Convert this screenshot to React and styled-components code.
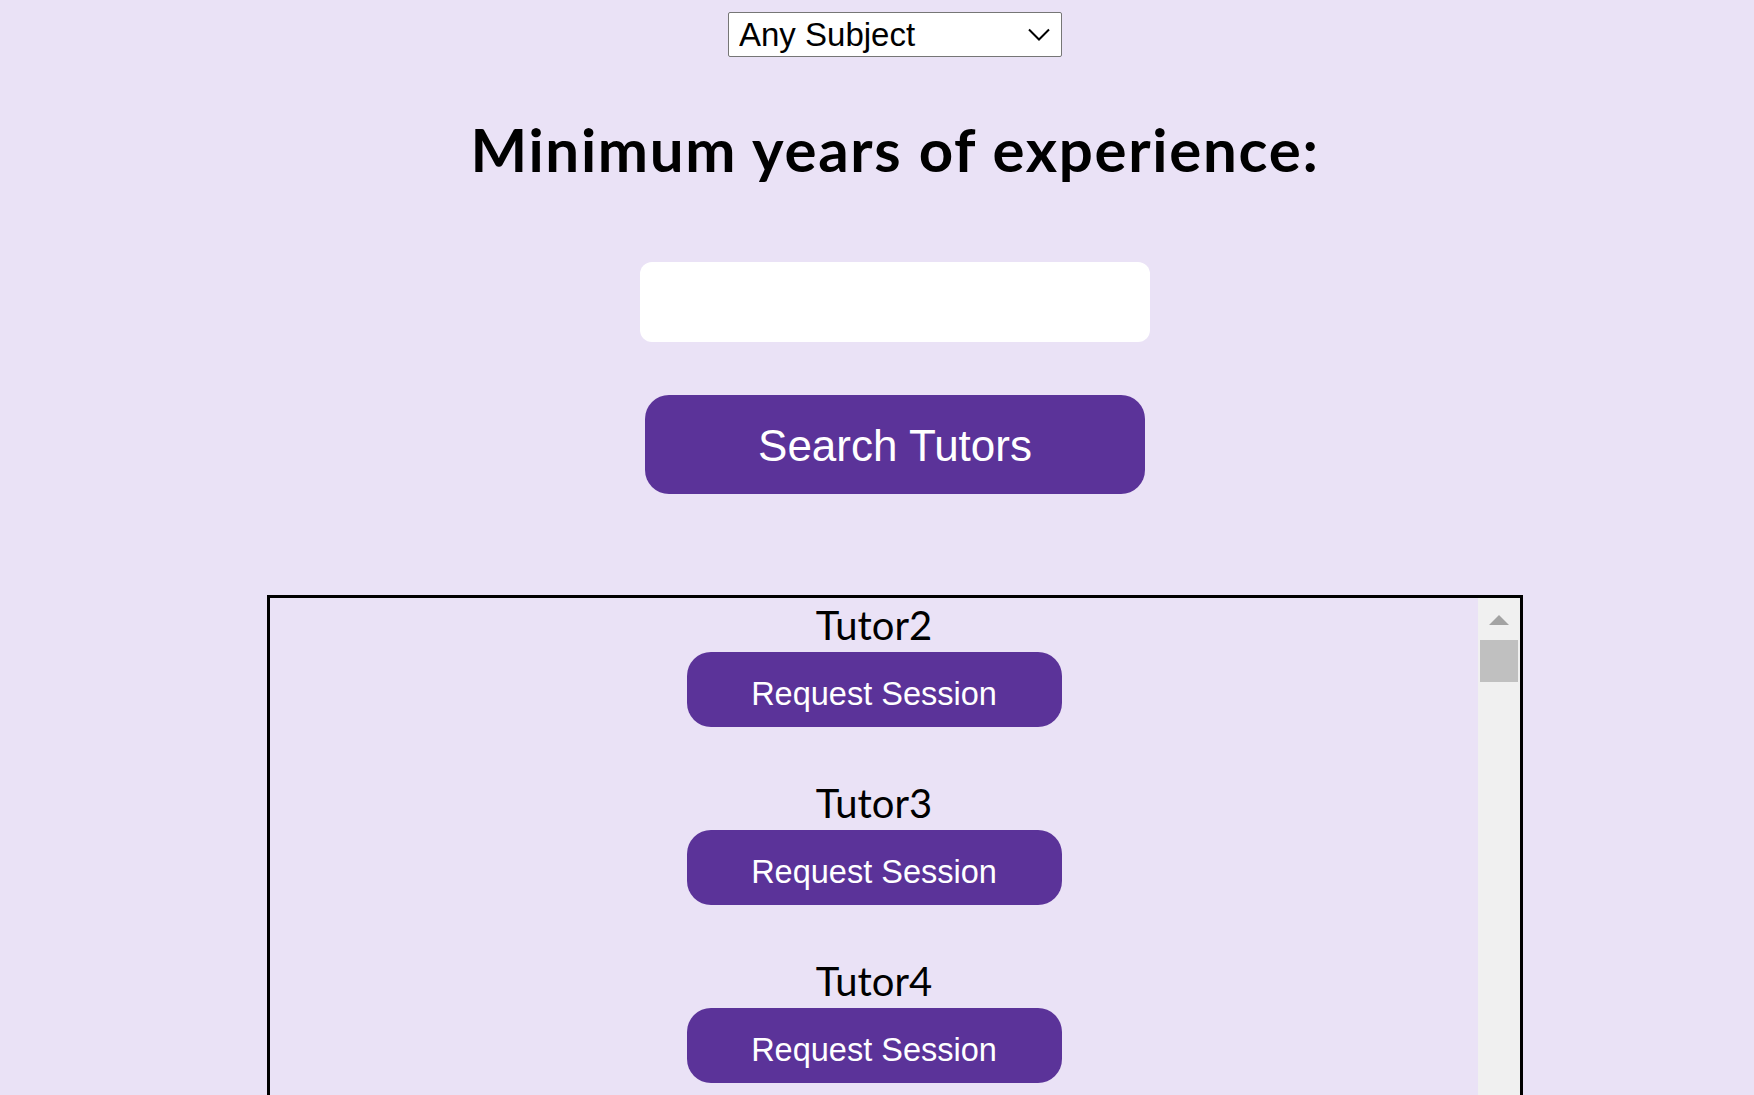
import React from 'react';
import styled, { createGlobalStyle } from 'styled-components';

const GlobalStyle = createGlobalStyle`
    html, body { margin:0; padding:0; overflow:hidden; background:#eae2f6; }
    *{ box-sizing:border-box; }
`;

const Page = styled.div`
    display:flex; flex-direction:column; align-items:center;
    padding:12px 0 0 36px; height:100vh;
    font-family:"Liberation Sans", Arial, sans-serif;
`;

const SelectWrap = styled.div`
    position:relative; width:334px; height:45px; flex-shrink:0;
    svg{ position:absolute; right:12px; top:16px; pointer-events:none; }
`;

const Select = styled.select`
    appearance:none; -webkit-appearance:none;
    width:100%; height:100%; padding:0 0 0 10px; margin:0;
    border:1px solid #767676; border-radius:2px; background:#fff;
    font-family:"Liberation Sans", Arial, sans-serif; font-size:33px; color:#000;
    outline:none;
`;

const Heading = styled.h1`
    margin:56px 0 0; font-family:Lato, "Open Sans", sans-serif; font-weight:700;
    font-size:60px; line-height:72px; letter-spacing:1.7px; color:#000;
`;

const YearsInput = styled.input`
    margin-top:77px; width:510px; height:80px; border:none; border-radius:12px;
    background:#fff; outline:none; padding:0 16px; font-size:30px; flex-shrink:0;
`;

const Button = styled.button`
    border:none; background:#5b3399; color:#fff; cursor:pointer; flex-shrink:0;
    font-family:"Liberation Sans", Arial, sans-serif;
    display:flex; align-items:center; justify-content:center;
    width:${p => p.$big ? '500px' : '375px'};
    height:${p => p.$big ? '99px' : '75px'};
    border-radius:24px;
    font-size:${p => p.$big ? '44px' : '32.5px'};
    padding:${p => p.$big ? '2px 0 0' : '10px 0 0'};
    margin-top:${p => p.$big ? '53px' : '0'};
`;

const ListBox = styled.div`
    margin-top:101px; width:1256px; flex:1; min-height:520px; border:3px solid #000;
    display:flex; overflow:hidden;
`;

const ListContent = styled.div`
    flex:1; overflow:hidden;
`;

const ScrollBar = styled.div`
    width:42px; background:#f0f0f0; display:flex; flex-direction:column; align-items:center;
`;

const ScrollArrow = styled.div`
    height:42px; width:100%; display:flex; justify-content:center; padding-top:17px;
    &::before{
        content:""; width:0; height:0;
        border-left:10px solid transparent; border-right:10px solid transparent;
        border-bottom:10px solid #a3a3a3;
    }
`;

const ScrollThumb = styled.div`
    width:38px; height:42px; background:#c0c0c0;
`;

const Tutor = styled.div`
    display:flex; flex-direction:column; align-items:center; padding-bottom:49px;
`;

const TutorName = styled.div`
    font-family:Lato, "Open Sans", sans-serif; font-size:40px; line-height:54px;
    color:#000;
`;

const tutors = ['Tutor2', 'Tutor3', 'Tutor4'];

const App = () => {
    return (
        <Page>
            <GlobalStyle />
            <SelectWrap>
                <Select defaultValue="any">
                    <option value="any">Any Subject</option>
                </Select>
                <svg width="22" height="13" viewBox="0 0 22 13">
                    <path d="M1 1.5 L11 11.5 L21 1.5" fill="none" stroke="#000" strokeWidth="2" />
                </svg>
            </SelectWrap>
            <Heading>Minimum years of experience:</Heading>
            <YearsInput type="text" />
            <Button $big>Search Tutors</Button>
            <ListBox>
                <ListContent>
                    {tutors.map(name => (
                        <Tutor key={name}>
                            <TutorName>{name}</TutorName>
                            <Button>Request Session</Button>
                        </Tutor>
                    ))}
                </ListContent>
                <ScrollBar>
                    <ScrollArrow />
                    <ScrollThumb />
                </ScrollBar>
            </ListBox>
        </Page>
    );
};

export default App;
